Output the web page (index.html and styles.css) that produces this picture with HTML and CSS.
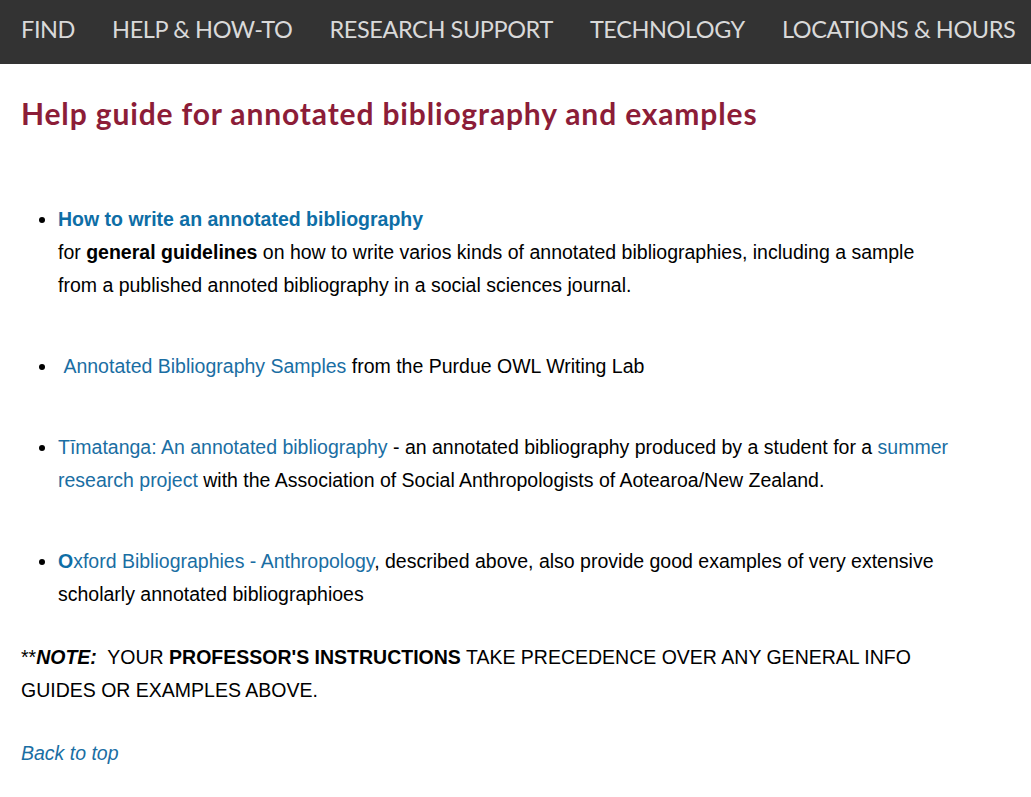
FILE: index.html
```html
<!DOCTYPE html>
<html lang="en">
<head>
<meta charset="utf-8">
<title>Help guide for annotated bibliography and examples</title>
<link rel="stylesheet" href="styles.css">
</head>
<body>
<nav class="topnav">
  <a class="navitem" href="#">FIND</a>
  <a class="navitem" href="#">HELP &amp; HOW-TO</a>
  <a class="navitem" href="#">RESEARCH SUPPORT</a>
  <a class="navitem" href="#">TECHNOLOGY</a>
  <a class="navitem" href="#">LOCATIONS &amp; HOURS</a>
</nav>
<main class="content">
  <h1 class="title">Help guide for annotated bibliography and examples</h1>
  <ul class="guides">
    <li class="guide"><a class="link strong" href="#">How to write an annotated bibliography</a><br>for <b>general guidelines</b> on how to write varios kinds of annotated bibliographies, including a sample from a published annoted bibliography in a social sciences journal.</li>
    <li class="guide">&nbsp;<a class="link" href="#">Annotated Bibliography Samples</a> from the Purdue OWL Writing Lab</li>
    <li class="guide"><a class="link" href="#">Tīmatanga: An annotated bibliography</a> - an annotated bibliography produced by a student for a <a class="link" href="#">summer research project</a> with the Association of Social Anthropologists of Aotearoa/New Zealand.</li>
    <li class="guide"><a class="link" href="#"><b>O</b>xford Bibliographies - Anthropology</a>, described above, also provide good examples of very extensive scholarly annotated bibliographioes</li>
  </ul>
  <p class="note">**<b><i>NOTE:</i></b>&nbsp; YOUR <b>PROFESSOR'S INSTRUCTIONS</b> TAKE PRECEDENCE OVER ANY GENERAL INFO GUIDES OR EXAMPLES ABOVE.</p>
  <p class="back"><a class="link" href="#"><i>Back to top</i></a></p>
</main>
</body>
</html>
```
FILE: styles.css
```css
html, body {
  margin: 0;
  padding: 0;
  background: #fff;
}
body {
  font-family: "Liberation Sans", Arial, sans-serif;
  color: #000;
}
.topnav {
  display: flex;
  align-items: center;
  height: 58px;
  padding: 0 0 6px 21px;
  background: #333333;
  gap: 37px;
  white-space: nowrap;
  overflow: hidden;
}
.navitem {
  font-family: Lato, "Open Sans", sans-serif;
  font-size: 23.5px;
  color: #d9d9d9;
  text-decoration: none;
  letter-spacing: -0.4px;
}
.content {
  padding: 0 21px;
  width: 934px;
}
.title {
  font-family: Lato, "Open Sans", sans-serif;
  font-weight: 700;
  font-size: 30px;
  color: #8c1d38;
  margin: 29px 0 0 0;
  line-height: 40px;
  letter-spacing: 0.85px;
}
.guides {
  margin: 70px 0 0 0;
  padding-left: 37px;
  font-size: 19.5px;
  line-height: 33px;
}
.guide {
  margin-bottom: 48px;
}
.guide:last-child {
  margin-bottom: 0;
}
.link {
  color: #1a6ea3;
  text-decoration: none;
}
.link.strong {
  font-weight: 700;
  color: #0e6ea6;
}
.link b {
  color: #0e6ea6;
}
.note {
  font-size: 19.5px;
  line-height: 33px;
  margin: 30px 0 0 0;
}
.back {
  font-size: 19.5px;
  line-height: 33px;
  margin: 30px 0 0 0;
}
```
